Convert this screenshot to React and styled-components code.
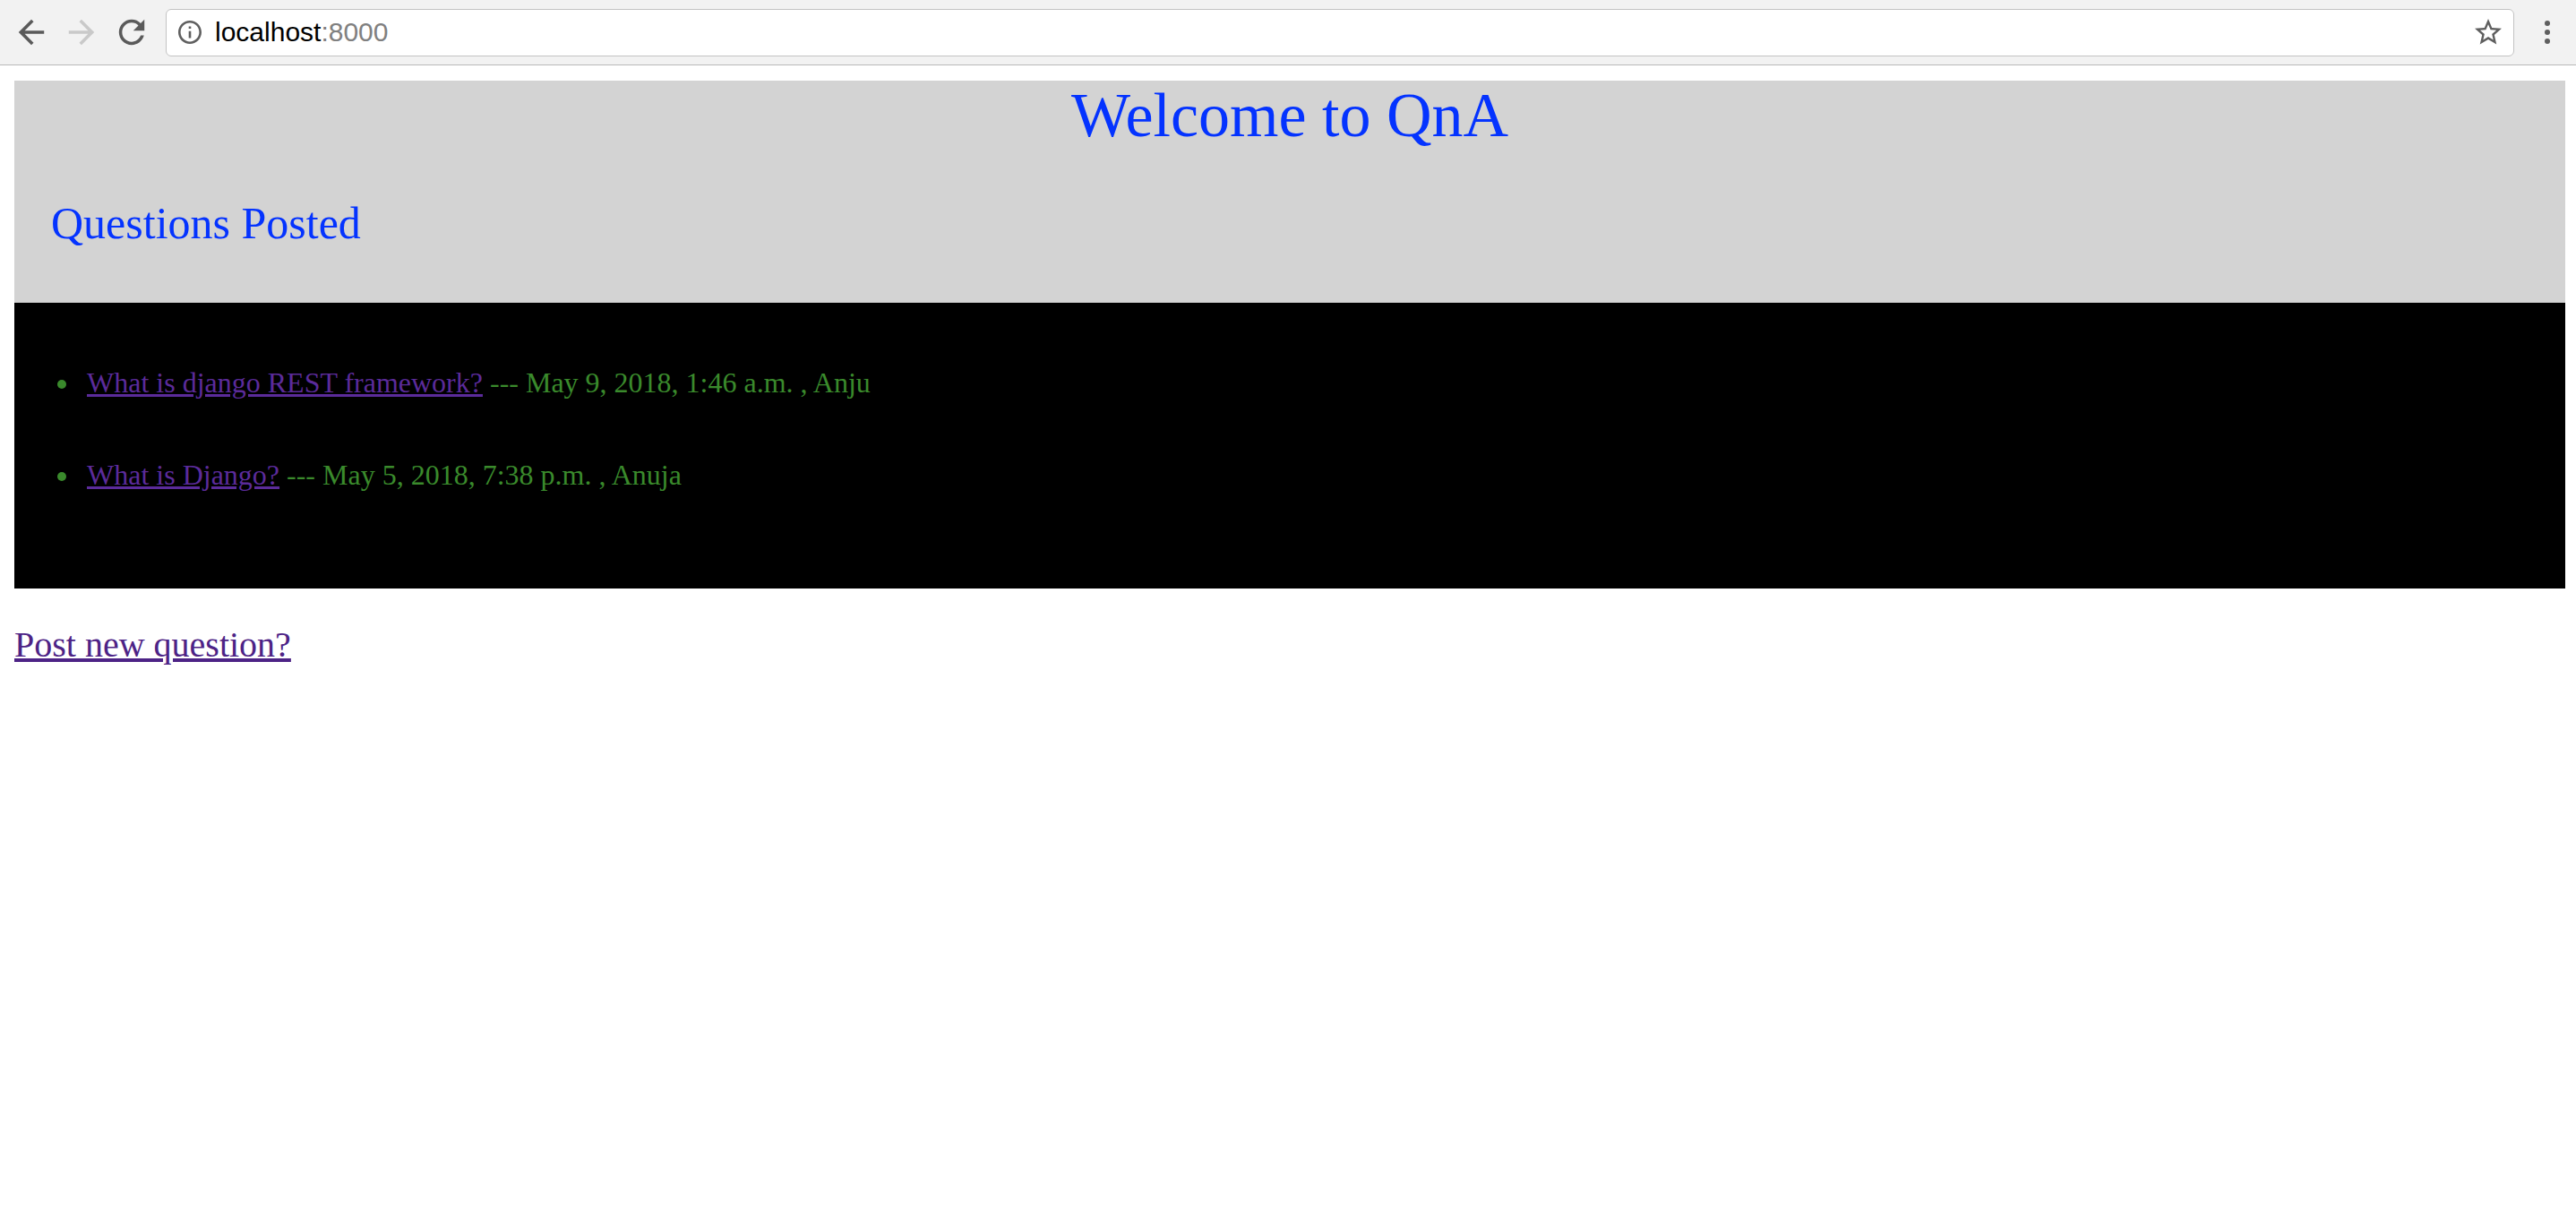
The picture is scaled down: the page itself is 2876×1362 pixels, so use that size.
import React from "react";
import styled, { createGlobalStyle } from "styled-components";

const GlobalStyle = createGlobalStyle`
  html, body {
    margin: 0;
    padding: 0;
    background: #ffffff;
  }
`;

const questions = [
  { id: 1, title: "What is django REST framework?", meta: "--- May 9, 2018, 1:46 a.m. , Anju" },
  { id: 2, title: "What is Django?", meta: "--- May 5, 2018, 7:38 p.m. , Anuja" },
];

const BackIcon = ({ color }) => (
  <svg width="32" height="32" viewBox="3 3 18 18" fill={color}>
    <path d="M20 11H7.83l5.59-5.59L12 4l-8 8 8 8 1.41-1.41L7.83 13H20v-2z" />
  </svg>
);

const ForwardIcon = ({ color }) => (
  <svg width="32" height="32" viewBox="3 3 18 18" fill={color}>
    <path d="M12 4l-1.41 1.41L16.17 11H4v2h12.17l-5.58 5.59L12 20l8-8z" />
  </svg>
);

const ReloadIcon = ({ color }) => (
  <svg width="32" height="32" viewBox="3 3 18 18" fill={color}>
    <path d="M17.65 6.35C16.2 4.9 14.21 4 12 4c-4.42 0-7.99 3.58-7.99 8s3.57 8 7.99 8c3.73 0 6.84-2.55 7.73-6h-2.08c-.82 2.33-3.04 4-5.650 4-3.31 0-6-2.69-6-6s2.69-6 6-6c1.66 0 3.14.69 4.22 1.78L13 11h7V4l-2.35 2.35z" />
  </svg>
);

const InfoIcon = () => (
  <svg width="26" height="26" viewBox="2 2 20 20" fill="#5f5f5f">
    <path d="M11 7h2v2h-2zm0 4h2v6h-2zm1-9C6.48 2 2 6.48 2 12s4.48 10 10 10 10-4.48 10-10S17.52 2 12 2zm0 18c-4.41 0-8-3.59-8-8s3.59-8 8-8 8 3.59 8 8-3.59 8-8 8z" />
  </svg>
);

const StarIcon = () => (
  <svg width="30" height="30" viewBox="2 2 20 20" fill="#5f5f5f">
    <path d="M22 9.24l-7.19-.62L12 2 9.19 8.63 2 9.24l5.46 4.73L5.82 21 12 17.27 18.18 21l-1.63-7.03L22 9.24zM12 15.4l-3.76 2.27 1-4.28-3.32-2.88 4.38-.38L12 6.1l1.71 4.04 4.38.38-3.32 2.88 1 4.28L12 15.4z" />
  </svg>
);

const App = () => {
  return (
    <>
      <GlobalStyle />
      <Toolbar>
        <NavButton><BackIcon color="#5a5a5a" /></NavButton>
        <NavButton><ForwardIcon color="#c9c9c9" /></NavButton>
        <NavButton><ReloadIcon color="#5a5a5a" /></NavButton>
        <AddressBox>
          <InfoIcon />
          <Url>
            localhost<Port>:8000</Port>
          </Url>
          <StarIcon />
        </AddressBox>
        <MenuDots>
          <Dot />
          <Dot />
          <Dot />
        </MenuDots>
      </Toolbar>

      <Page>
        <Header>
          <Title>Welcome to QnA</Title>
          <Subtitle>Questions Posted</Subtitle>
        </Header>
        <ListPanel>
          {questions.map((q) => (
            <Item key={q.id}>
              <Bullet />
              <QuestionLink href="#">{q.title}</QuestionLink>
              <Meta>{q.meta}</Meta>
            </Item>
          ))}
        </ListPanel>
        <PostLink href="#">Post new question?</PostLink>
      </Page>
    </>
  );
};
export default App;

const Toolbar = styled.div`
  display: flex;
  align-items: center;
  height: 72px;
  padding: 0 18px 0 7px;
  background-color: #f2f2f2;
  border-bottom: 1px solid #b9b9b9;
`;

const NavButton = styled.div`
  width: 56px;
  height: 40px;
  display: flex;
  align-items: center;
  justify-content: center;
`;

const AddressBox = styled.div`
  flex: 1;
  display: flex;
  align-items: center;
  height: 51px;
  margin-left: 10px;
  padding: 0 13px 0 13px;
  background-color: #ffffff;
  border: 1px solid #c3c3c3;
  border-radius: 6px;
`;

const Url = styled.div`
  flex: 1;
  margin-left: 15px;
  font-family: "Liberation Sans", Arial, sans-serif;
  font-size: 30px;
  color: #000000;
`;

const Port = styled.span`
  color: #808080;
`;

const MenuDots = styled.div`
  width: 28px;
  margin-left: 23px;
  display: flex;
  flex-direction: column;
  align-items: center;
  gap: 4px;
`;

const Dot = styled.span`
  width: 6px;
  height: 6px;
  border-radius: 50%;
  background-color: #5f5f5f;
`;

const Page = styled.div`
  padding: 17px 12px 40px 16px;
  font-family: "Liberation Serif", "Times New Roman", serif;
`;

const Header = styled.div`
  background-color: #d3d3d3;
  padding-bottom: 59px;
`;

const Title = styled.h1`
  margin: 0;
  text-align: center;
  font-size: 70px;
  line-height: 78px;
  font-weight: normal;
  color: #0433ff;
`;

const Subtitle = styled.h2`
  margin: 51px 0 0 0;
  padding-left: 41px;
  font-size: 50px;
  line-height: 60px;
  font-weight: normal;
  color: #0433ff;
`;

const ListPanel = styled.ul`
  margin: 0;
  padding: 69px 0 107px 48px;
  list-style: none;
  background-color: #000000;
  display: flex;
  flex-direction: column;
  gap: 63px;
`;

const Item = styled.li`
  display: flex;
  align-items: center;
  font-size: 32px;
  line-height: 40px;
  white-space: pre;
`;

const Bullet = styled.span`
  width: 10px;
  height: 10px;
  margin: 4px 23px 0 0;
  border-radius: 50%;
  background-color: #3a8a2c;
`;

const QuestionLink = styled.a`
  color: #5b2b9a;
  text-decoration: underline;
`;

const Meta = styled.span`
  color: #3a8a2c;
  margin-left: 8px;
`;

const PostLink = styled.a`
  display: inline-block;
  margin-top: 40px;
  font-size: 40px;
  line-height: 46px;
  color: #4d2386;
  text-decoration: underline;
`;
